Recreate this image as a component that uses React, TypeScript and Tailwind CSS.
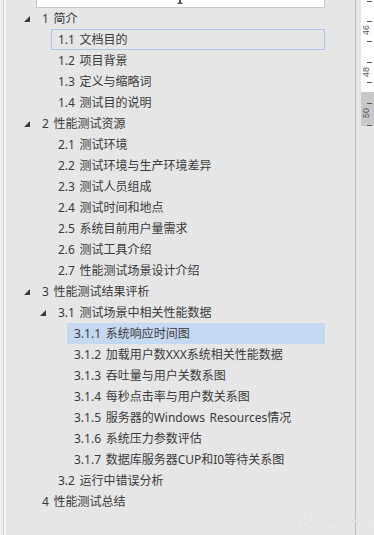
type Item = {
    label: string;
    level: number;
    expandable?: boolean;
    selected?: boolean;
    active?: boolean;
};

const items: Item[] = [
    { label: '1 简介', level: 1, expandable: true },
    { label: '1.1 文档目的', level: 2, selected: true },
    { label: '1.2 项目背景', level: 2 },
    { label: '1.3 定义与缩略词', level: 2 },
    { label: '1.4 测试目的说明', level: 2 },
    { label: '2 性能测试资源', level: 1, expandable: true },
    { label: '2.1 测试环境', level: 2 },
    { label: '2.2 测试环境与生产环境差异', level: 2 },
    { label: '2.3 测试人员组成', level: 2 },
    { label: '2.4 测试时间和地点', level: 2 },
    { label: '2.5 系统目前用户量需求', level: 2 },
    { label: '2.6 测试工具介绍', level: 2 },
    { label: '2.7 性能测试场景设计介绍', level: 2 },
    { label: '3 性能测试结果评析', level: 1, expandable: true },
    { label: '3.1 测试场景中相关性能数据', level: 2, expandable: true },
    { label: '3.1.1 系统响应时间图', level: 3, active: true },
    { label: '3.1.2 加载用户数XXX系统相关性能数据', level: 3 },
    { label: '3.1.3 吞吐量与用户关数系图', level: 3 },
    { label: '3.1.4 每秒点击率与用户数关系图', level: 3 },
    { label: '3.1.5 服务器的Windows Resources情况', level: 3 },
    { label: '3.1.6 系统压力参数评估', level: 3 },
    { label: '3.1.7 数据库服务器CUP和I0等待关系图', level: 3 },
    { label: '3.2 运行中错误分析', level: 2 },
    { label: '4 性能测试总结', level: 1 },
];

// indent is measured from the pane's inner edge (after the 6px left frame)
const indent: Record<number, string> = {
    1: 'pl-[13px]',
    2: 'pl-[29px]',
    3: 'pl-[45px]',
};

function Caret() {
    return (
        <svg width="6" height="6" viewBox="0 0 6 6">
            <polygon points="6,0 6,6 0,6" fill="#3a3a3a" />
        </svg>
    );
}

function Row({ item }: { item: Item }) {
    let box = 'border-transparent';
    if (item.selected) box = 'border-[#a9c6ea]';
    if (item.active) box = 'border-transparent bg-[#c5d8f1]';

    return (
        <div className={`flex h-[21px] ${indent[item.level]}`}>
            <div className="w-[16px] flex items-center justify-center pt-[1px]">
                {item.expandable && <Caret />}
            </div>
            <div className={`flex-1 flex items-center border pl-[6px] whitespace-nowrap ${box}`}>
                {item.label}
            </div>
        </div>
    );
}

function Ruler() {
    const ticks = [1, 21, 41, 62, 82, 103, 125];
    const labels = [
        { y: 30, text: '46' },
        { y: 72, text: '48' },
        { y: 113, text: '50' },
    ];
    return (
        <svg width="13" height="535" viewBox="0 0 13 535" className="block">
            <rect x="0" y="0" width="13" height="92" fill="#ffffff" />
            <rect x="0" y="92" width="13" height="34" fill="#c8c8c8" />
            {ticks.map((y) => (
                <line key={y} x1="6" x2="11" y1={y + 0.5} y2={y + 0.5} stroke="#555" strokeWidth="1" />
            ))}
            {labels.map((l) => (
                <text
                    key={l.text}
                    x="0"
                    y="0"
                    transform={`translate(8 ${l.y}) rotate(-90)`}
                    textAnchor="middle"
                    fontSize="9"
                    fill="#555"
                    style={{ fontFamily: '"Liberation Sans", sans-serif' }}
                >
                    {l.text}
                </text>
            ))}
        </svg>
    );
}

export default function App() {
    return (
        <div
            className="relative w-[374px] h-[535px] overflow-hidden flex bg-[#e6e6e6] text-[12px] [word-spacing:1.5px] text-[#3a3a3a]"
            style={{ fontFamily: '"Noto Sans", "Noto Sans CJK SC", sans-serif' }}
        >
            {/* left edge */}
            <div className="w-[6px] flex">
                <div className="w-[3px] bg-[#efefef]" />
                <div className="w-[1px] bg-[#cfcfcf]" />
                <div className="w-[2px] bg-[#f4f4f4]" />
            </div>

            {/* navigation pane */}
            <div className="w-[349px] flex flex-col">
                <div className="ml-[30px] mr-[30px] h-[8px] bg-white border-x border-b border-[#c9c9c9] flex justify-center">
                    <svg width="8" height="4" viewBox="0 0 8 4" className="ml-[-1px]">
                        <rect x="3" y="0" width="2" height="2" fill="#555" />
                        <polygon points="1,4 7,4 4,1" fill="#555" />
                    </svg>
                </div>
                <div className="flex flex-col pr-[30px]">
                    {items.map((item) => (
                        <Row key={item.label} item={item} />
                    ))}
                </div>
            </div>

            {/* divider */}
            <div className="w-[1px] bg-[#bdbdbd]" />
            <div className="w-[5px]" />
            <Ruler />

            <div
                className="absolute right-[3px] bottom-[7px] text-[9px] text-[#fafafa] tracking-[0.2px] [word-spacing:0px]"
                style={{ fontFamily: '"Liberation Sans", sans-serif', textShadow: '0 0 1px #b8b8b8' }}
            >
                CSDN @cuoluocha
            </div>
        </div>
    );
}
